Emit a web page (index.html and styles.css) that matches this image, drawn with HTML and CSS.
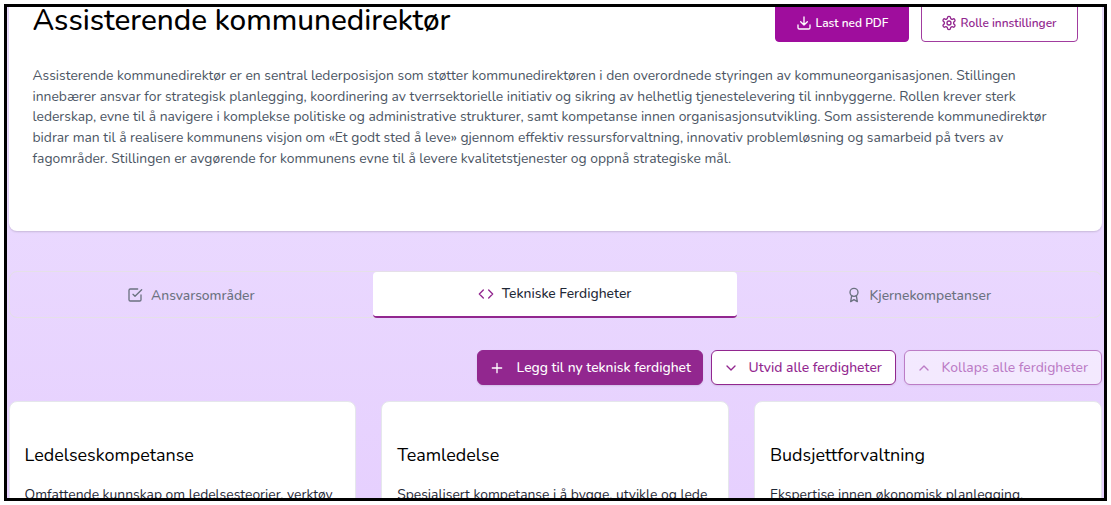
FILE: index.html
```
<!DOCTYPE html>
<html lang="no">
  <head>
    <meta charset="UTF-8" />
    <meta name="viewport" content="width=device-width, initial-scale=1.0" />
    <title>Assisterende kommunedirektør</title>
    <link rel="stylesheet" href="styles.css">
  </head>
  <body>
    <div class="frame">
      <main class="page">
        <section class="role">
          <div class="role-top">
            <h1>Assisterende kommunedirektør</h1>
            <div class="role-actions">
              <button class="small-btn pdf">
                <svg class="icon" viewBox="0 0 24 24"><path d="M21 15v4a2 2 0 0 1-2 2H5a2 2 0 0 1-2-2v-4M7 10l5 5 5-5M12 15V3" /></svg>
                <span>Last ned PDF</span>
              </button>
              <button class="small-btn settings">
                <svg class="icon" viewBox="0 0 24 24"><path d="M12.22 2h-.44a2 2 0 0 0-2 2v.18a2 2 0 0 1-1 1.73l-.43.25a2 2 0 0 1-2 0l-.15-.08a2 2 0 0 0-2.73.73l-.22.38a2 2 0 0 0 .73 2.73l.15.1a2 2 0 0 1 1 1.72v.51a2 2 0 0 1-1 1.74l-.15.09a2 2 0 0 0-.73 2.73l.22.38a2 2 0 0 0 2.73.73l.15-.08a2 2 0 0 1 2 0l.43.25a2 2 0 0 1 1 1.73V20a2 2 0 0 0 2 2h.44a2 2 0 0 0 2-2v-.18a2 2 0 0 1 1-1.73l.43-.25a2 2 0 0 1 2 0l.15.08a2 2 0 0 0 2.73-.73l.22-.39a2 2 0 0 0-.73-2.73l-.15-.08a2 2 0 0 1-1-1.74v-.5a2 2 0 0 1 1-1.74l.15-.09a2 2 0 0 0 .73-2.73l-.22-.38a2 2 0 0 0-2.73-.73l-.15.08a2 2 0 0 1-2 0l-.43-.25a2 2 0 0 1-1-1.73V4a2 2 0 0 0-2-2z" /><circle cx="12" cy="12" r="3" /></svg>
                <span>Rolle innstillinger</span>
              </button>
            </div>
          </div>
          <p class="role-text">
            Assisterende kommunedirektør er en sentral lederposisjon som støtter kommunedirektøren i den overordnede styringen av kommuneorganisasjonen. Stillingen<br />
            innebærer ansvar for strategisk planlegging, koordinering av tverrsektorielle initiativ og sikring av helhetlig tjenestelevering til innbyggerne. Rollen krever sterk<br />
            lederskap, evne til å navigere i komplekse politiske og administrative strukturer, samt kompetanse innen organisasjonsutvikling. Som assisterende kommunedirektør<br />
            bidrar man til å realisere kommunens visjon om «Et godt sted å leve» gjennom effektiv ressursforvaltning, innovativ problemløsning og samarbeid på tvers av<br />
            fagområder. Stillingen er avgørende for kommunens evne til å levere kvalitetstjenester og oppnå strategiske mål.
          </p>
        </section>

        <nav class="tabs">
          <a class="tab">
            <svg class="icon" viewBox="0 0 24 24"><path d="M9 11l3 3L22 4M21 12v7a2 2 0 0 1-2 2H5a2 2 0 0 1-2-2V5a2 2 0 0 1 2-2h11" /></svg>
            <span>Ansvarsområder</span>
          </a>
          <a class="tab active">
            <svg class="icon" viewBox="0 0 24 24"><path d="M16 18l6-6-6-6M8 6l-6 6 6 6" /></svg>
            <span>Tekniske Ferdigheter</span>
          </a>
          <a class="tab">
            <svg class="icon" viewBox="0 0 24 24"><circle cx="12" cy="8" r="6" /><path d="M15.5 12.9L17 22l-5-3-5 3 1.5-9.1" /></svg>
            <span>Kjernekompetanser</span>
          </a>
        </nav>

        <div class="toolbar">
          <button class="btn add">
            <svg class="icon" viewBox="0 0 24 24"><path d="M12 5v14M5 12h14" /></svg>
            <span>Legg til ny teknisk ferdighet</span>
          </button>
          <button class="btn expand">
            <svg class="icon" viewBox="0 0 24 24"><path d="M6 9l6 6 6-6" /></svg>
            <span>Utvid alle ferdigheter</span>
          </button>
          <button class="btn collapse" disabled>
            <svg class="icon" viewBox="0 0 24 24"><path d="M6 15l6-6 6 6" /></svg>
            <span>Kollaps alle ferdigheter</span>
          </button>
        </div>

        <div class="cards">
          <article class="card">
            <h2>Ledelseskompetanse</h2>
            <p>Omfattende kunnskap om ledelsesteorier, verktøy</p>
          </article>
          <article class="card">
            <h2>Teamledelse</h2>
            <p>Spesialisert kompetanse i å bygge, utvikle og lede</p>
          </article>
          <article class="card">
            <h2>Budsjettforvaltning</h2>
            <p>Ekspertise innen økonomisk planlegging,</p>
          </article>
        </div>
      </main>
    </div>
  </body>
</html>
```
FILE: styles.css
```
* {
  box-sizing: border-box;
}
body {
  margin: 0;
  padding: 4px;
  background: #fff;
  font-family: Nunito, Lato, 'Open Sans', sans-serif;
  overflow: hidden;
}
.frame {
  width: 1103px;
  height: 497px;
  border: 3px solid #000;
  background: linear-gradient(#eddfff, #e6d0fe);
  overflow: hidden;
}
.page {
  margin: -24px 2.4px 0 1.5px;
}
h1,
h2,
p {
  margin: 0;
  font-weight: 400;
}
.icon {
  flex: none;
  width: 16px;
  height: 16px;
  fill: none;
  stroke: currentColor;
  stroke-width: 2;
  stroke-linecap: round;
  stroke-linejoin: round;
}
button {
  display: flex;
  align-items: center;
  font-family: inherit;
  font-weight: 500;
  white-space: nowrap;
}

.role {
  height: 248px;
  padding: 20px 24px 0;
  border-radius: 8px;
  background: #fff;
  box-shadow: 0 1px 2px rgba(0, 0, 0, 0.15);
}
.role-top {
  display: flex;
  justify-content: space-between;
}
.role h1 {
  color: #000;
  font-size: 29.7px;
  font-weight: 500;
  line-height: 34px;
}
.role-actions {
  display: flex;
  gap: 12px;
}
.small-btn {
  height: 39px;
  gap: 4px;
  padding: 0 20px;
  border: 1px solid #a13c9f;
  border-radius: 4px;
  font-size: 11.9px;
  font-weight: 600;
}
.pdf {
  width: 134px;
  border-color: #9f0d9d;
  background: #9f0d9d;
  color: #fff;
}
.settings {
  width: 157px;
  padding-left: 19px;
  background: #fff;
  color: #92278f;
}
.role-text {
  margin-top: 24px;
  color: #4b5563;
  font-size: 13.87px;
  line-height: 20.7px;
  white-space: nowrap;
}

.tabs {
  display: grid;
  grid-template-columns: repeat(3, 1fr);
  height: 47px;
  margin-top: 40px;
  border: 1px solid #e5e0e8;
  border-radius: 8px;
}
.tab {
  display: flex;
  align-items: center;
  justify-content: center;
  gap: 8px;
  padding-right: 1px;
  color: #6b7280;
  font-size: 13.87px;
  font-weight: 500;
}
.tab.active {
  height: 46px;
  padding-bottom: 1px;
  border-bottom: 2px solid #92278f;
  border-radius: 4px;
  background: #fff;
  color: #1f2937;
}
.tab.active .icon {
  color: #92278f;
}

.toolbar {
  display: flex;
  justify-content: flex-end;
  gap: 8px;
  margin-top: 32px;
}
.btn {
  height: 35px;
  gap: 10px;
  padding: 0 11px;
  border: 1px solid #92278f;
  border-radius: 6px;
  background: #fff;
  color: #92278f;
  font-size: 13.87px;
  box-shadow: 0 1px 2px rgba(0, 0, 0, 0.1);
}
.add {
  width: 226px;
  gap: 12px;
  background: #92278f;
  color: #fff;
}
.expand {
  width: 185px;
}
.collapse {
  width: 198px;
  opacity: 0.5;
}

.cards {
  display: grid;
  grid-template-columns: repeat(3, 1fr);
  gap: 25px;
  margin-top: 16px;
}
.card {
  height: 160px;
  padding: 40px 15px 0;
  border: 1px solid #e5e7eb;
  border-radius: 8px;
  background: #fff;
  white-space: nowrap;
}
.card h2 {
  color: #000;
  font-size: 17.95px;
  line-height: 26px;
}
.card p {
  margin-top: 16px;
  color: #1f2937;
  font-size: 13.87px;
  line-height: 21px;
}
```
